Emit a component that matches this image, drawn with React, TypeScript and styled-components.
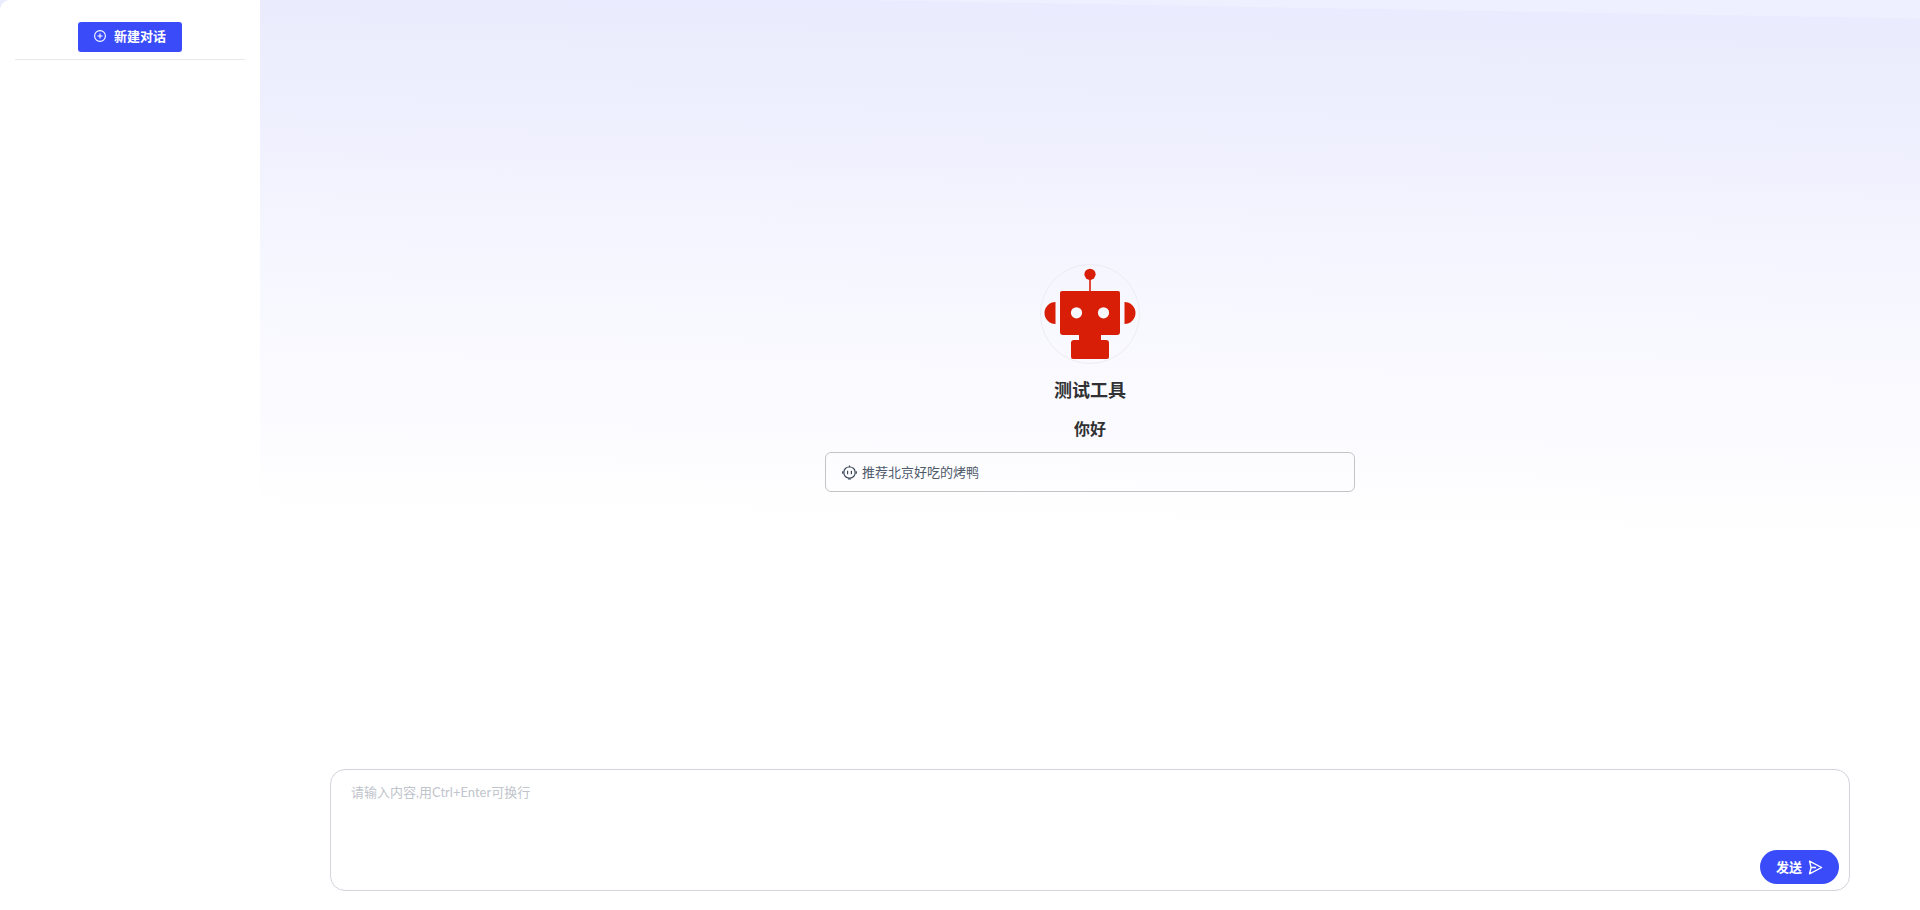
import React from "react";
import styled, { createGlobalStyle } from "styled-components";

const GlobalStyle = createGlobalStyle`
  *, *::before, *::after { box-sizing: border-box; }
  body {
    margin: 0;
    font-family: Lato, "Noto Sans CJK SC", sans-serif;
    font-size: 14px;
    color: #303133;
  }
  button, textarea { font: inherit; }
`;

const Page = styled.div`
  display: flex;
  min-height: 100vh;
  background: linear-gradient(181deg, #eff0ff 0, #eff0ff 18px, #eaebfe 19px, #ebedfd 60px, #eff0fe 150px, #f3f3ff 210px, #f7f7ff 310px, #fbfbff 440px, #ffffff 540px);
`;

const Sidebar = styled.aside`
  flex: 0 0 260px;
  padding: 22px 15px;
  background: #ffffff;
  border-top-left-radius: 10px;
`;

const SidebarHeader = styled.div`
  display: flex;
  justify-content: center;
  padding-bottom: 7px;
  border-bottom: 1px solid #e8e8e8;
`;

const PrimaryButton = styled.button<{ $round?: boolean }>`
  display: flex;
  align-items: center;
  gap: ${(p) => (p.$round ? 6 : 8)}px;
  height: ${(p) => (p.$round ? 34 : 30)}px;
  padding: ${(p) => (p.$round ? "0 16px" : "0 16px 2px")};
  border: 0;
  border-radius: ${(p) => (p.$round ? 17 : 3)}px;
  background: #3a4cfa;
  color: #ffffff;
  font-size: 13px;
  line-height: 18px;
  font-weight: 600;
  cursor: pointer;
`;

const Main = styled.main`
  flex: 1;
  display: flex;
  flex-direction: column;
  padding: 0 70px 19px;
`;

const Welcome = styled.section`
  flex: 1;
  display: flex;
  flex-direction: column;
  align-items: center;
  padding-top: 264px;
`;

const Avatar = styled.div`
  width: 100px;
  height: 100px;
  border: 1px solid #ececf2;
  border-radius: 50%;
`;

const Title = styled.h1`
  margin: 12px 0 0;
  font-size: 18px;
  line-height: 28px;
  font-weight: 600;
`;

const Greeting = styled.h2`
  margin: 13px 0 11px;
  font-size: 16px;
  line-height: 24px;
  font-weight: 600;
`;

const Suggestion = styled.button`
  display: flex;
  align-items: center;
  gap: 5px;
  width: 530px;
  max-width: 100%;
  height: 40px;
  padding: 0 16px;
  border: 1px solid #c4c4c6;
  border-radius: 6px;
  background: transparent;
  color: #4e5969;
  font-size: 13px;
  line-height: 18px;
  cursor: pointer;
`;

const Composer = styled.form`
  display: flex;
  flex-direction: column;
  height: 122px;
  padding: 12px 10px 6px 20px;
  border: 1px solid #d3d3de;
  border-radius: 15px;
  background: #ffffff;
`;

const Message = styled.textarea`
  flex: 1;
  padding: 0;
  border: 0;
  outline: 0;
  resize: none;
  background: transparent;
  font-size: 13px;
  line-height: 20px;
  &::placeholder { color: #c0c4cc; opacity: 1; }
`;

const Actions = styled.div`
  display: flex;
  justify-content: flex-end;
`;

const PlusIcon = () => (
  <svg width="12" height="12" viewBox="0 0 12 12" fill="none" stroke="currentColor" aria-hidden="true">
    <circle cx="6" cy="6" r="5.4" strokeWidth="1.1" />
    <path d="M6 3.4v5.2M3.4 6h5.2" strokeWidth="1.1" />
  </svg>
);

const RobotLogo = () => (
  <svg width="98" height="98" viewBox="0 0 98 98" fill="#d81e06" aria-hidden="true">
    <circle cx="49" cy="9.3" r="5.6" />
    <path d="M48.2 14h1.6v14h-1.6z" />
    <path
      fillRule="evenodd"
      d="M21 26H77a2 2 0 0 1 2 2V67a3 3 0 0 1-3 3H60v5h5a3 3 0 0 1 3 3V92a2 2 0 0 1-2 2H32a2 2 0 0 1-2-2V78a3 3 0 0 1 3-3h5v-5H22a3 3 0 0 1-3-3V28a2 2 0 0 1 2-2ZM35.5 42.2a5.6 5.6 0 1 0 0 11.2a5.6 5.6 0 0 0 0-11.2ZM62.5 42.2a5.6 5.6 0 1 0 0 11.2a5.6 5.6 0 0 0 0-11.2Z"
    />
    <path d="M14.5 37v22a11 11 0 0 1 0-22ZM83.5 37v22a11 11 0 0 0 0-22Z" />
  </svg>
);

const BotIcon = () => (
  <svg width="15" height="15" viewBox="0 0 15 15" fill="none" stroke="#3d4a5c" strokeWidth="1.2" aria-hidden="true">
    <rect x="1.9" y="2" width="11.2" height="11" rx="5" />
    <path d="M7.5 .5v1.6M6 13.8h3M.7 6.2v2.6M14.3 6.2v2.6M5.6 5.8v3.4M9.4 5.8v3.4" />
  </svg>
);

const SendIcon = () => (
  <svg width="15" height="15" viewBox="0 0 15 15" fill="none" stroke="currentColor" strokeWidth="1.4" strokeLinejoin="round" aria-hidden="true">
    <path d="M1.5 1.2 13.6 7.5 1.5 13.8 3.1 7.5ZM3.1 7.5H8" />
  </svg>
);

export default function App() {
  return (
    <>
      <GlobalStyle />
      <Page>
        <Sidebar>
          <SidebarHeader>
            <PrimaryButton type="button">
              <PlusIcon />
              新建对话
            </PrimaryButton>
          </SidebarHeader>
        </Sidebar>
        <Main>
          <Welcome>
            <Avatar>
              <RobotLogo />
            </Avatar>
            <Title>测试工具</Title>
            <Greeting>你好</Greeting>
            <Suggestion type="button">
              <BotIcon />
              推荐北京好吃的烤鸭
            </Suggestion>
          </Welcome>
          <Composer onSubmit={(e) => e.preventDefault()}>
            <Message aria-label="请输入内容" placeholder="请输入内容,用Ctrl+Enter可换行" />
            <Actions>
              <PrimaryButton type="submit" $round>
                发送
                <SendIcon />
              </PrimaryButton>
            </Actions>
          </Composer>
        </Main>
      </Page>
    </>
  );
}
